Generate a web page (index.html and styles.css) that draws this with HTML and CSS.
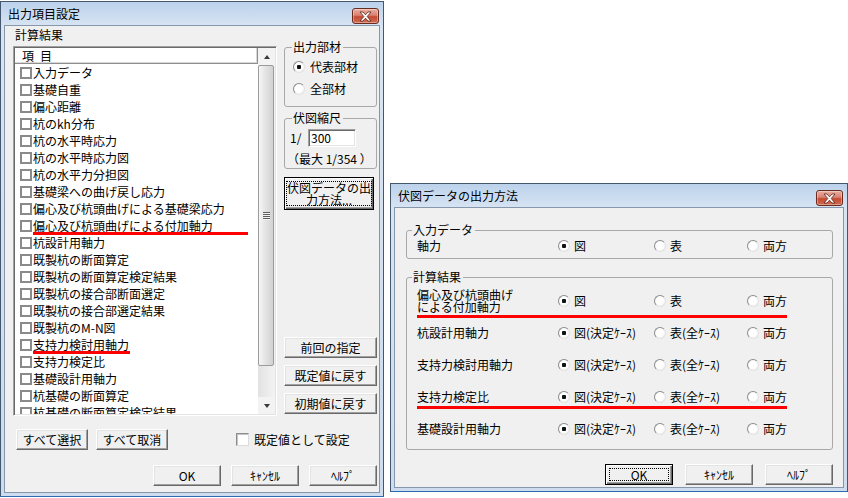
FILE: index.html
```html
<!DOCTYPE html>
<html lang="ja">
<head>
<meta charset="utf-8">
<title>出力項目設定</title>
<link rel="stylesheet" href="styles.css">
</head>
<body>
<div class="win win-main">
  <div class="titlebar">
    <span class="title">出力項目設定</span>
    <span class="close"><svg width="13" height="11" viewBox="0 0 13 11"><path d="M1 1H4L6.5 3.8L9 1H12L8.2 5.5L12 10H9L6.5 7.2L4 10H1L4.8 5.5Z" fill="#fff" stroke="#5b2318" stroke-width="0.8" stroke-linejoin="round"/></svg></span>
  </div>
  <div class="client client-main">
    <div class="main-row">
      <div class="list-col">
        <div class="caption">計算結果</div>
        <div class="listbox">
          <div class="list-body">
            <div class="list-head"><span class="h1">項</span><span>目</span></div>
            <div class="items">
              <div class="item"><span class="cb"></span>入力データ</div>
              <div class="item"><span class="cb"></span>基礎自重</div>
              <div class="item"><span class="cb"></span>偏心距離</div>
              <div class="item"><span class="cb"></span>杭のkh分布</div>
              <div class="item"><span class="cb"></span>杭の水平時応力</div>
              <div class="item"><span class="cb"></span>杭の水平時応力図</div>
              <div class="item"><span class="cb"></span>杭の水平力分担図</div>
              <div class="item"><span class="cb"></span>基礎梁への曲げ戻し応力</div>
              <div class="item"><span class="cb"></span>偏心及び杭頭曲げによる基礎梁応力</div>
              <div class="item mark mark-long"><span class="cb"></span>偏心及び杭頭曲げによる付加軸力</div>
              <div class="item"><span class="cb"></span>杭設計用軸力</div>
              <div class="item"><span class="cb"></span>既製杭の断面算定</div>
              <div class="item"><span class="cb"></span>既製杭の断面算定検定結果</div>
              <div class="item"><span class="cb"></span>既製杭の接合部断面選定</div>
              <div class="item"><span class="cb"></span>既製杭の接合部選定結果</div>
              <div class="item"><span class="cb"></span>既製杭のM-N図</div>
              <div class="item mark mark-short"><span class="cb"></span>支持力検討用軸力</div>
              <div class="item"><span class="cb"></span>支持力検定比</div>
              <div class="item"><span class="cb"></span>基礎設計用軸力</div>
              <div class="item"><span class="cb"></span>杭基礎の断面算定</div>
              <div class="item"><span class="cb"></span>杭基礎の断面算定検定結果</div>
            </div>
          </div>
          <div class="vscroll">
            <div class="sb-btn"><span class="arrow-up"></span></div>
            <div class="sb-thumb"><span class="grip"></span></div>
            <div class="sb-track"></div>
            <div class="sb-btn"><span class="arrow-down"></span></div>
          </div>
        </div>
      </div>
      <div class="side-col">
        <fieldset class="group g-member">
          <legend>出力部材</legend>
          <div class="radio-row"><span class="radio on"></span>代表部材</div>
          <div class="radio-row"><span class="radio"></span>全部材</div>
        </fieldset>
        <fieldset class="group g-scale">
          <legend>伏図縮尺</legend>
          <div class="scale-row"><span class="scale-label">1/</span><span class="edit">300</span></div>
          <div class="scale-max">（最大 1/354 ）</div>
        </fieldset>
        <div class="btn btn-default btn-method"><span class="focus focus-2line">伏図データの出<br>力方法...</span></div>
        <div class="side-buttons">
          <div class="btn">前回の指定</div>
          <div class="btn">既定値に戻す</div>
          <div class="btn">初期値に戻す</div>
        </div>
      </div>
    </div>
    <div class="select-row">
      <div class="btn btn-select">すべて選択</div>
      <div class="btn btn-select">すべて取消</div>
      <div class="check-row"><span class="check"></span>既定値として設定</div>
    </div>
    <div class="dialog-buttons">
      <div class="btn btn-dlg">OK</div>
      <div class="btn btn-dlg">ｷｬﾝｾﾙ</div>
      <div class="btn btn-dlg">ﾍﾙﾌﾟ</div>
    </div>
  </div>
</div>

<div class="win win-method">
  <div class="titlebar">
    <span class="title">伏図データの出力方法</span>
    <span class="close"><svg width="13" height="11" viewBox="0 0 13 11"><path d="M1 1H4L6.5 3.8L9 1H12L8.2 5.5L12 10H9L6.5 7.2L4 10H1L4.8 5.5Z" fill="#fff" stroke="#5b2318" stroke-width="0.8" stroke-linejoin="round"/></svg></span>
  </div>
  <div class="client client-method">
    <fieldset class="group g-input">
      <legend>入力データ</legend>
      <div class="opt-row opt-row-input">
        <div class="opt-label">軸力</div>
        <div class="opt"><span class="radio on"></span>図</div>
        <div class="opt"><span class="radio"></span>表</div>
        <div class="opt"><span class="radio"></span>両方</div>
      </div>
    </fieldset>
    <fieldset class="group g-calc">
      <legend>計算結果</legend>
      <div class="opt-row mark-row mark-row-1">
        <div class="opt-label two-line">偏心及び杭頭曲げ<br>による付加軸力</div>
        <div class="opt"><span class="radio on"></span>図</div>
        <div class="opt"><span class="radio"></span>表</div>
        <div class="opt"><span class="radio"></span>両方</div>
      </div>
      <div class="opt-row">
        <div class="opt-label">杭設計用軸力</div>
        <div class="opt"><span class="radio on"></span>図(決定ｹｰｽ)</div>
        <div class="opt"><span class="radio"></span>表(全ｹｰｽ)</div>
        <div class="opt"><span class="radio"></span>両方</div>
      </div>
      <div class="opt-row">
        <div class="opt-label">支持力検討用軸力</div>
        <div class="opt"><span class="radio on"></span>図(決定ｹｰｽ)</div>
        <div class="opt"><span class="radio"></span>表(全ｹｰｽ)</div>
        <div class="opt"><span class="radio"></span>両方</div>
      </div>
      <div class="opt-row mark-row mark-row-4">
        <div class="opt-label">支持力検定比</div>
        <div class="opt"><span class="radio on"></span>図(決定ｹｰｽ)</div>
        <div class="opt"><span class="radio"></span>表(全ｹｰｽ)</div>
        <div class="opt"><span class="radio"></span>両方</div>
      </div>
      <div class="opt-row">
        <div class="opt-label">基礎設計用軸力</div>
        <div class="opt"><span class="radio on"></span>図(決定ｹｰｽ)</div>
        <div class="opt"><span class="radio"></span>表(全ｹｰｽ)</div>
        <div class="opt"><span class="radio"></span>両方</div>
      </div>
    </fieldset>
    <div class="dialog-buttons dialog-buttons-method">
      <div class="btn btn-default btn-dlg2"><span class="focus">OK</span></div>
      <div class="btn btn-dlg2">ｷｬﾝｾﾙ</div>
      <div class="btn btn-dlg2">ﾍﾙﾌﾟ</div>
    </div>
  </div>
</div>
</body>
</html>
```

FILE: styles.css
```css
* { box-sizing: border-box; }
html, body { margin: 0; padding: 0; }
body {
  width: 848px;
  height: 498px;
  overflow: hidden;
  position: relative;
  background: #fff;
  font-family: "Noto Sans CJK JP", "Noto Sans", sans-serif;
  font-size: 12px;
  line-height: 14px;
  color: #000;
}

/* ---------- window frame ---------- */
.win {
  position: absolute;
  display: flex;
  flex-direction: column;
  border: 1px solid #44576e;
  border-bottom-color: #2c6bb0;
  padding: 0 3px 3px;
  background: linear-gradient(#bcd2eb, #d7e4f3 24px, #cddcee);
}
.win-main { left: 0; top: 1px; width: 384px; height: 496px; }
.win-method { left: 390px; top: 183px; width: 458px; height: 309px; }

.titlebar {
  height: 23px;
  margin: 0 -3px;
  padding: 0 4px 0 7px;
  display: flex;
  align-items: flex-start;
}
.title { line-height: 23px; }
.close {
  margin-left: auto;
  margin-top: 6px;
  width: 27px;
  height: 16px;
  border: 1px solid #6b2a1e;
  border-radius: 3px;
  background: linear-gradient(#eab0a2, #d98070 45%, #c44a32 55%, #d26a52);
  display: flex;
  align-items: center;
  justify-content: center;
  box-shadow: inset 0 0 0 1px rgba(255,255,255,0.35);
}
.close svg { display: block; }

.client {
  flex: 1;
  border: 1px solid #8797ab;
  background: #f0f0f0;
  display: flex;
  flex-direction: column;
}

/* ---------- main dialog ---------- */
.client-main { padding: 2px 2px 0 8px; }
.main-row { display: flex; gap: 7px; }
.list-col { width: 264px; display: flex; flex-direction: column; }
.caption { padding-left: 2px; margin-bottom: 4px; }

.listbox {
  height: 370px;
  display: flex;
  border: 1px solid;
  border-color: #a0a0a0 #fff #fff #a0a0a0;
  box-shadow: inset 1px 1px #696969, inset -1px -1px #e3e3e3;
  padding: 1px;
  background: #fff;
}
.list-body { flex: 1; display: flex; flex-direction: column; overflow: hidden; }
.list-head {
  height: 16px;
  line-height: 15px;
  padding-left: 7px;
  background: #fff;
  border-bottom: 1px solid #8e8e8e;
  border-right: 1px solid #8e8e8e;
  box-shadow: inset -1px -1px #d8d8d8;
  display: flex;
}
.list-head .h1 { margin-right: 6px; }
.items { flex: 1; overflow: hidden; }
.item {
  position: relative;
  height: 17px;
  line-height: 17px;
  padding-left: 5px;
  display: flex;
  align-items: center;
  white-space: nowrap;
}
.cb {
  width: 12px;
  height: 12px;
  margin-right: 1px;
  border: 2px solid #8a8a8a;
  background: #fff;
  flex: none;
}
.mark::after {
  content: "";
  position: absolute;
  left: 18px;
  top: 15px;
  height: 3px;
  background: #f00;
}
.mark-long::after { width: 215px; }
.mark-short::after { width: 97px; }

.vscroll {
  width: 17px;
  display: flex;
  flex-direction: column;
  background: linear-gradient(90deg, #e2e2e2, #f3f3f3);
}
.sb-btn {
  height: 17px;
  display: flex;
  align-items: center;
  justify-content: center;
  background: #f3f3f3;
}
.arrow-up, .arrow-down {
  width: 1px;
  height: 0;
  border-left: 3px solid transparent;
  border-right: 3px solid transparent;
}
.arrow-up { border-bottom: 4px solid #3a3a3a; }
.arrow-down { border-top: 4px solid #3a3a3a; }
.sb-thumb {
  height: 301px;
  margin: 0 1px 0 0;
  border: 1px solid #9b9b9b;
  border-radius: 2px;
  background: linear-gradient(90deg, #f6f6f6, #e4e4e4 45%, #d2d2d2);
  display: flex;
  align-items: center;
  justify-content: center;
}
.grip {
  width: 7px;
  height: 8px;
  background: repeating-linear-gradient(#5e5e5e 0 1px, #f4f4f4 1px 2px);
}
.sb-track { flex: 1; }

.side-col {
  width: 93px;
  display: flex;
  flex-direction: column;
  padding-top: 12px;
  padding-bottom: 2px;
}

.group {
  margin: 0;
  min-width: 0;
  border: 1px solid #a8a8a8;
  border-radius: 3px;
}
.group legend { padding: 0 2px 0 1px; line-height: 14px; }

.g-member { padding: 2px 0 6px 7px; }
.radio-row { height: 22px; display: flex; align-items: center; padding-left: 1px; }
.radio-row .radio { margin-right: 5px; }

.radio {
  position: relative;
  width: 12px;
  height: 12px;
  flex: none;
  border-radius: 50%;
  border: 1px solid;
  border-color: #8d8d8d #e2e2e2 #e2e2e2 #8d8d8d;
  background: radial-gradient(circle at 45% 45%, #fff 40%, #ececec);
}
.radio.on::after {
  content: "";
  position: absolute;
  left: 3px;
  top: 3px;
  width: 4px;
  height: 4px;
  border-radius: 1px;
  background: #111;
}

.g-scale { margin-top: 4px; padding: 4px 0 2px 7px; }
.scale-row { display: flex; align-items: center; margin-left: -2px; }
.scale-label { width: 18px; }
.edit {
  width: 48px;
  height: 18px;
  line-height: 14px;
  background: #fff;
  border: 1px solid;
  border-color: #a0a0a0 #fff #fff #a0a0a0;
  box-shadow: inset 1px 1px #696969, inset -1px -1px #e3e3e3;
  padding-top: 1px;
  padding-left: 2px;
}
.scale-max { margin-top: 5px; margin-left: -5px; white-space: nowrap; }

.btn {
  height: 21px;
  display: flex;
  align-items: center;
  justify-content: center;
  background: #f0f0f0;
  border: 1px solid;
  border-color: #fff #696969 #696969 #fff;
  box-shadow: inset -1px -1px #a0a0a0, inset 1px 1px #e3e3e3;
  white-space: nowrap;
}
.btn-default {
  border-color: #000;
  box-shadow: inset 1px 1px #fff, inset -1px -1px #696969, inset -2px -2px #a0a0a0;
  padding: 3px;
  align-items: stretch;
}
.focus {
  flex: 1;
  border: 1px dotted #000;
  display: flex;
  align-items: center;
  justify-content: center;
  text-align: center;
}
.btn-method { width: 90px; height: 33px; margin-top: 8px; }
.focus-2line { line-height: 12px; }

.side-buttons {
  margin-top: auto;
  display: flex;
  flex-direction: column;
  gap: 7px;
}

.select-row {
  margin-top: 13px;
  padding-left: 3px;
  display: flex;
  align-items: center;
  gap: 8px;
}
.btn-select { width: 72px; }
.check-row { margin-left: 60px; display: flex; align-items: center; }
.check {
  width: 13px;
  height: 13px;
  margin-right: 5px;
  background: #fff;
  border: 1px solid;
  border-color: #8d8d8d #dcdcdc #dcdcdc #8d8d8d;
  box-shadow: inset 1px 1px #c4c4c4;
}

.dialog-buttons {
  margin-top: 15px;
  display: flex;
  justify-content: flex-end;
  gap: 10px;
}
.btn-dlg { width: 68px; }

/* ---------- method dialog ---------- */
.client-method { padding: 15px 10px 0 11px; }
.g-input { padding: 1px 0 4px 5px; }
.g-calc { margin-top: 11px; padding: 1px 0 4px 5px; }
.opt-row {
  position: relative;
  height: 32px;
  padding-left: 5px;
  display: grid;
  grid-template-columns: 141px 96px 93px 1fr;
  align-items: center;
  white-space: nowrap;
}
.opt-row-input { height: 16px; }
.opt { display: flex; align-items: center; }
.opt .radio { margin-right: 4px; }
.two-line { line-height: 12px; }
.mark-row::after {
  content: "";
  position: absolute;
  left: 5px;
  width: 370px;
  height: 3px;
  background: #f00;
}
.mark-row-1::after { top: 30px; }
.mark-row-4::after { top: 25px; }

.dialog-buttons-method { margin-top: 14px; gap: 12px; }
.btn-dlg2 { width: 68px; }
```
